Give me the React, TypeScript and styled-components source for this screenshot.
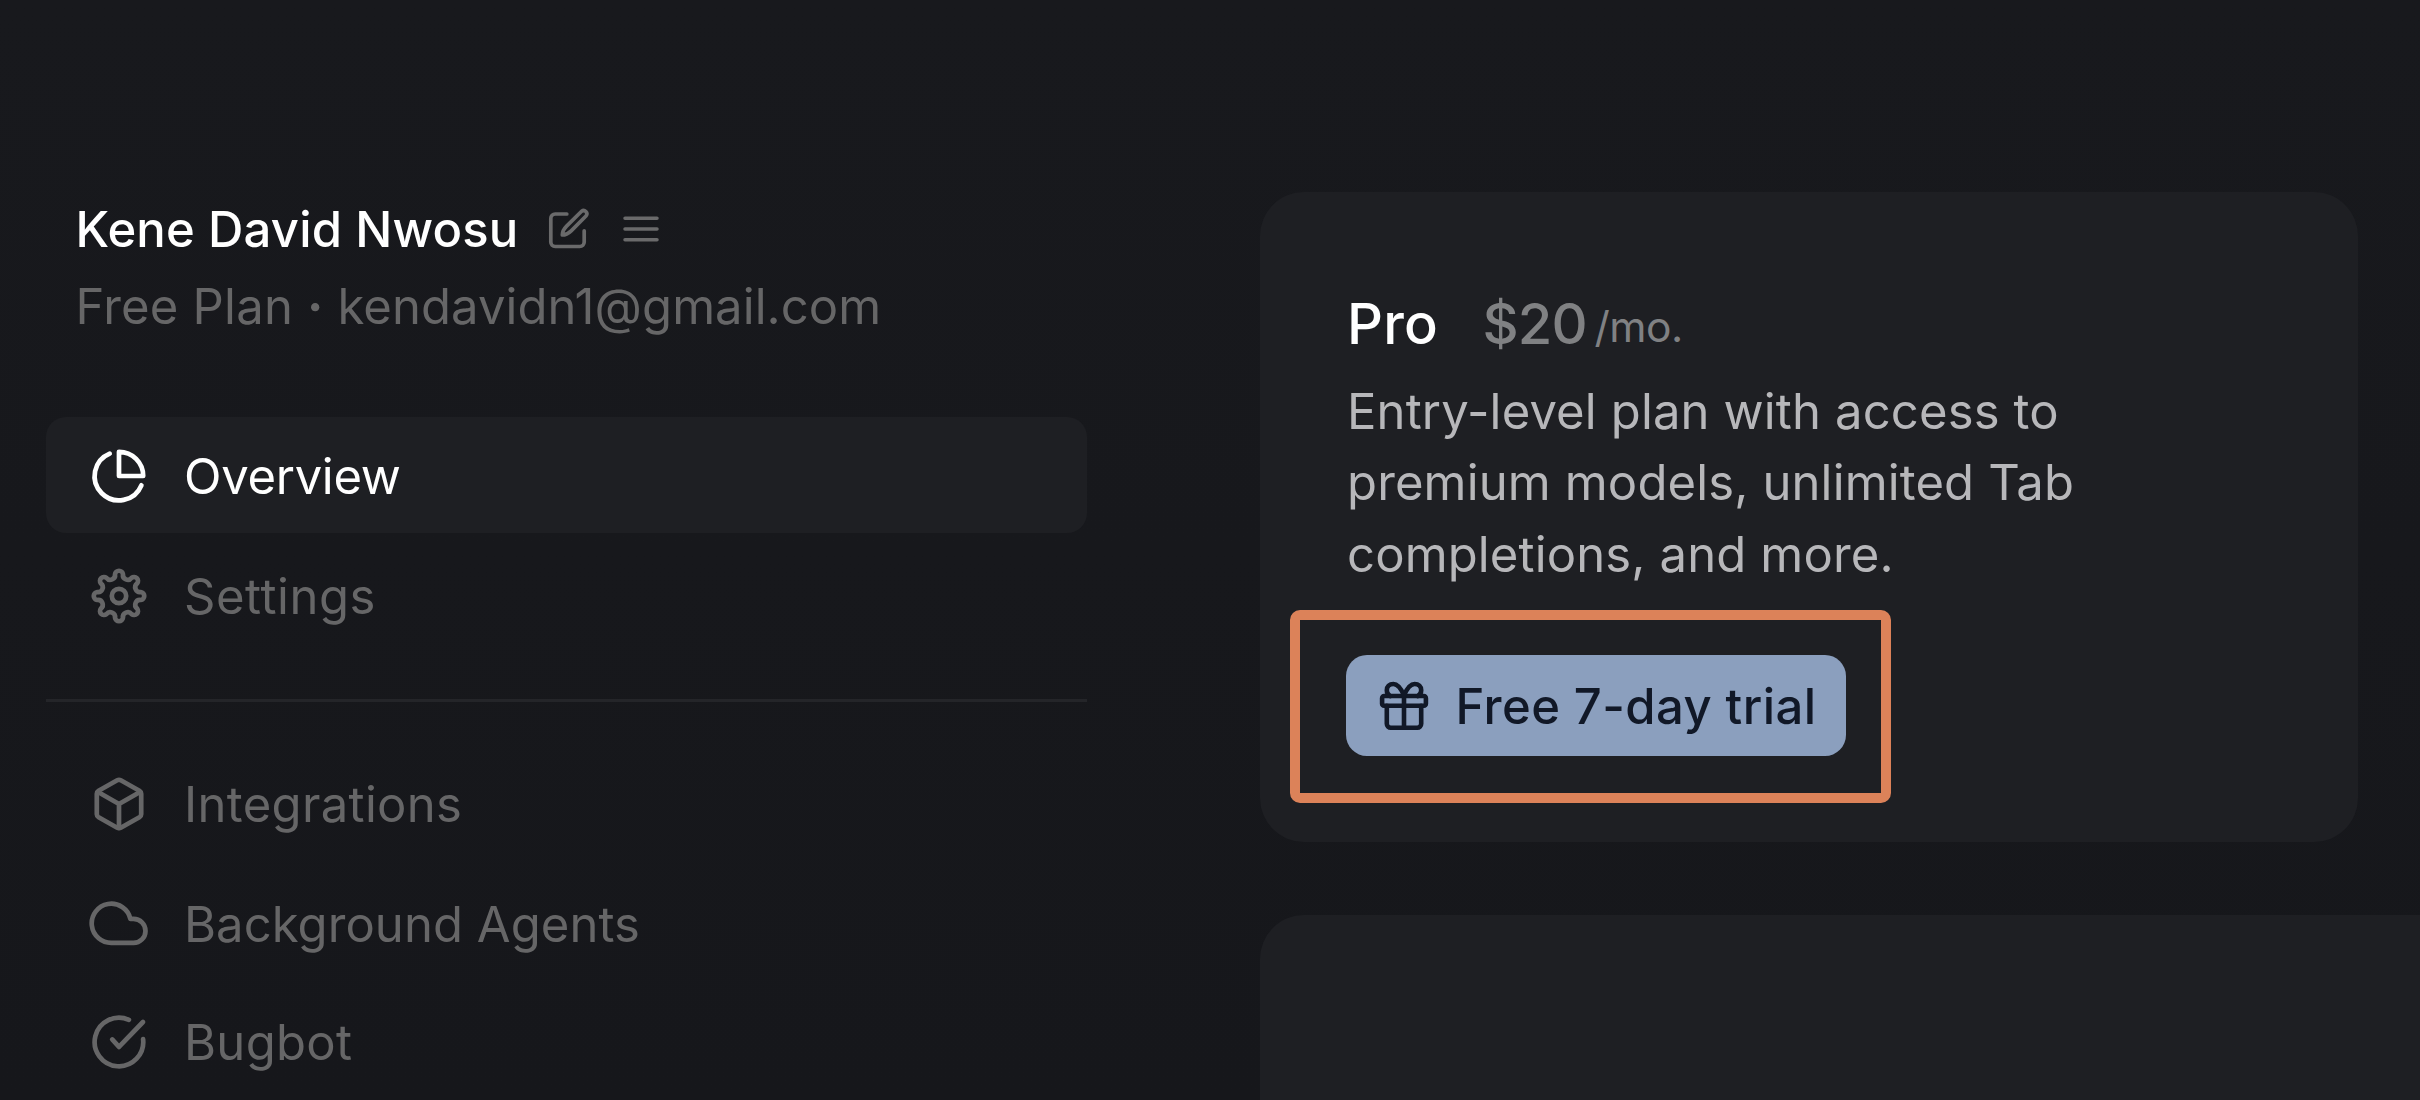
import React from 'react';
import styled, { createGlobalStyle } from 'styled-components';

const GlobalStyle = createGlobalStyle`
  *, *::before, *::after { box-sizing: border-box; }
  html, body { margin: 0; background: #17181c; }
  body {
    font-family: Inter, "Liberation Sans", sans-serif;
    overflow: hidden;
    -webkit-font-smoothing: antialiased;
  }
`;

const Page = styled.div`
  display: flex;
  align-items: flex-start;
  gap: 173.5px;
  width: 2420px;
  height: 1100px;
  padding-left: 46px;
  overflow: hidden;
  background: linear-gradient(#18191d, #16171b);
`;

const Sidebar = styled.aside`
  flex: none;
  width: 1040.5px;
  padding-top: 200px;
`;

const Profile = styled.header`
  display: flex;
  flex-direction: column;
  gap: 17px;
  padding-left: 29.5px;
  white-space: nowrap;
`;

const NameRow = styled.div`
  display: flex;
  align-items: center;
  height: 60px;
`;

const Name = styled.h1`
  margin: 0 28.5px 0 0;
  font-size: 49px;
  line-height: 60px;
  font-weight: 500;
  letter-spacing: 0.15px;
  color: #fff;
`;

const IconButton = styled.button<{ $offset?: number; $lift?: number }>`
  display: flex;
  margin: ${p => -(p.$lift ?? 2)}px 0 0 ${p => p.$offset ?? 0}px;
  padding: 0;
  border: 0;
  background: none;
  color: #6a6a6b;
`;

const PlanLine = styled.p`
  margin: 0;
  font-size: 49px;
  line-height: 60px;
  letter-spacing: 0.21px;
  color: #666667;
`;

const Dot = styled.span`
  margin: 0 -0.2px 0 0;
  font-weight: 700;
`;

const Email = styled.span`
  letter-spacing: 0.07px;
`;

const NavList = styled.nav<{ $rows: string; $top: number }>`
  display: grid;
  grid-template-rows: ${p => p.$rows};
  gap: 4px;
  margin-top: ${p => p.$top}px;
`;

const NavItem = styled.a<{ $active?: boolean }>`
  display: flex;
  align-items: center;
  gap: 35.5px;
  padding: 2px 0 0 42.5px;
  border-radius: 20px;
  color: ${p => (p.$active ? '#fff' : '#666667')};
  background: ${p => (p.$active ? '#1e1f23' : 'transparent')};
`;

const NavLabel = styled.span<{ $tracking: number }>`
  padding-top: 2px;
  font-size: 49px;
  line-height: 60px;
  letter-spacing: ${p => p.$tracking}px;
  white-space: nowrap;
`;

const Divider = styled.hr`
  height: 3px;
  margin: 46px 0 0;
  border: 0;
  background: #242529;
`;

const Main = styled.main`
  flex: none;
  display: flex;
  flex-direction: column;
  gap: 72.5px;
  width: 1240px;
  padding-top: 192px;
`;

const Card = styled.section`
  width: 1098px;
  height: 650px;
  padding: 96px 0 0 87px;
  border-radius: 44px;
  background: #1e1f23;
`;

const WideCard = styled.section`
  height: 260px;
  border-radius: 44px 0 0 0;
  background: #1e1f23;
`;

const PlanHeading = styled.div`
  display: flex;
  height: 72px;
  white-space: nowrap;
`;

const PlanName = styled.h2`
  margin: 0 44.5px 0 0;
  font-size: 56px;
  line-height: 72px;
  font-weight: 500;
  letter-spacing: 0.2px;
  color: #fff;
`;

const Price = styled.span`
  font-size: 56px;
  line-height: 72px;
  font-weight: 500;
  letter-spacing: -0.8px;
  color: #808183;
`;

const Period = styled.span`
  margin-left: 7.5px;
  font-size: 42.5px;
  line-height: 78px;
  letter-spacing: -0.5px;
  color: #808183;
`;

const Description = styled.p`
  margin: 15.5px 0 0;
  font-size: 49px;
  line-height: 71.67px;
  letter-spacing: 0.14px;
  color: #b7b7ba;
  white-space: nowrap;
`;

const TrialAction = styled.div`
  position: relative;
  width: 500px;
  margin: 64px 0 0 -1px;
`;

const TrialButton = styled.button`
  display: flex;
  align-items: center;
  gap: 23.5px;
  width: 100%;
  height: 101px;
  padding: 1px 0 0 30px;
  border: 0;
  border-radius: 21px;
  background: #8b9fbe;
  color: #111827;
  font: inherit;
  font-size: 49px;
  line-height: 60px;
  font-weight: 500;
  letter-spacing: 0.42px;
  white-space: nowrap;
`;

const TrialLabel = styled.span`
  padding-top: 3px;
`;

const Highlight = styled.div`
  position: absolute;
  top: -45px;
  left: -56px;
  width: 601px;
  height: 193px;
  border: 10px solid #dc8259;
  border-radius: 10px;
  pointer-events: none;
`;

/* Stroke icons drawn around a (0,0) centre in device pixels. */
function Glyph({ size = 60, stroke = 4.7, children }: { size?: number; stroke?: number; children: React.ReactNode }) {
  const h = size / 2;
  return (
    <svg
      width={size}
      height={size}
      viewBox={`${-h} ${-h} ${size} ${size}`}
      fill="none"
      stroke="currentColor"
      strokeWidth={stroke}
      strokeLinecap="round"
      strokeLinejoin="round"
    >
      {children}
    </svg>
  );
}

const PieIcon = () => (
  <Glyph>
    <path d="M-9.3 -22.4A24.3 24.3 0 1 0 22.4 9.3" />
    <path d="M0 -24.2A24.2 24.2 0 0 1 24.2 0H0Z" />
  </Glyph>
);

/* Eight round teeth joined by round valleys, every arc tangent to the next. */
function gearPath(): string {
  const toothDist = 22.3;
  const toothR = 4;
  const valleyDist = 22.8;
  const valleyR = 4.8;
  const at = (r: number, deg: number) => {
    const a = ((deg - 90) * Math.PI) / 180;
    return [r * Math.cos(a), r * Math.sin(a)];
  };
  const join = (toothDeg: number, valleyDeg: number) => {
    const t = at(toothDist, toothDeg);
    const v = at(valleyDist, valleyDeg);
    const k = toothR / (toothR + valleyR);
    return `${(t[0] + (v[0] - t[0]) * k).toFixed(2)} ${(t[1] + (v[1] - t[1]) * k).toFixed(2)}`;
  };
  let d = `M${join(0, -22.5)}`;
  for (let i = 0; i < 8; i++) {
    const deg = i * 45;
    d += `A${toothR} ${toothR} 0 0 1 ${join(deg, deg + 22.5)}`;
    d += `A${valleyR} ${valleyR} 0 0 0 ${join(deg + 45, deg + 22.5)}`;
  }
  return `${d}Z`;
}

const GearIcon = () => (
  <Glyph>
    <path d={gearPath()} />
    <circle r="7.2" />
  </Glyph>
);

const BoxIcon = () => (
  <Glyph>
    <path d="M-1.8 -23.7Q0 -24.7 1.8 -23.7L20.4 -13.2Q22.2 -12.1 22.2 -10.2V10.2Q22.2 12.1 20.4 13.2L1.8 23.7Q0 24.7 -1.8 23.7L-20.4 13.2Q-22.2 12.1 -22.2 10.2V-10.2Q-22.2 -12.1 -20.4 -13.2Z" />
    <path d="M-21 -12L0 0L21 -12M0 0V24" />
  </Glyph>
);

const CloudIcon = () => (
  <Glyph>
    <path d="M-6.6 18.9A19.6 19.6 0 1 1 11.4 -5.1H14.5A12 12 0 0 1 14.5 18.9Z" />
  </Glyph>
);

const CheckIcon = () => (
  <Glyph>
    <path d="M9.9 -22.2A24.3 24.3 0 1 0 24.1 -2.8" />
    <path d="M-6.8 -2.6L0 4.9L24 -20" />
  </Glyph>
);

const EditIcon = () => (
  <svg width="44" height="44" viewBox="0 0 44 44" fill="none" stroke="currentColor" strokeWidth="3.7" strokeLinecap="round" strokeLinejoin="round">
    <path d="M19.8 8H8.2A4.4 4.4 0 0 0 3.8 12.4V36.1A4.4 4.4 0 0 0 8.2 40.5H32.8A4.4 4.4 0 0 0 37.2 36.1V24.8" />
    <path d="M34.6 5.2L19.6 20.1C17 22.7 15.3 26 15.3 29C18.3 29 21.6 27.3 24.2 24.8L39.2 9.8A3.3 3.3 0 0 0 34.6 5.2Z" />
  </svg>
);

const MenuIcon = () => (
  <svg width="40" height="40" viewBox="0 0 40 40" fill="none" stroke="currentColor" strokeWidth="3.5" strokeLinecap="round">
    <path d="M4 9.2H36M4 20H36M4 30.8H36" />
  </svg>
);

const GiftIcon = () => (
  <Glyph size={56} stroke={4.6}>
    <rect x="-21.9" y="-10" width="43.8" height="9.8" rx="2" />
    <path d="M-17.2 -0.2V17.8A4 4 0 0 0 -13.2 21.8H13.2A4 4 0 0 0 17.2 17.8V-0.2M0 -10V21.8" />
    <path d="M0 -10.6C-2.4 -16.2 -6 -22 -10.6 -22C-14.6 -22 -17.2 -19.4 -17.2 -15.8C-17.2 -13.4 -16 -11.2 -14 -10M0 -10.6C2.4 -16.2 6 -22 10.6 -22C14.6 -22 17.2 -19.4 17.2 -15.8C17.2 -13.4 16 -11.2 14 -10" />
  </Glyph>
);

export default function App() {
  return (
    <>
      <GlobalStyle />
      <Page>
        <Sidebar>
          <Profile>
            <NameRow>
              <Name>Kene David Nwosu</Name>
              <IconButton aria-label="Edit name" $lift={4}><EditIcon /></IconButton>
              <IconButton aria-label="Menu" $offset={30}><MenuIcon /></IconButton>
            </NameRow>
            <PlanLine>Free Plan <Dot>·</Dot> <Email>kendavidn1@gmail.com</Email></PlanLine>
          </Profile>
          <NavList $rows="116px 116px" $top={80}>
            <NavItem $active><PieIcon /><NavLabel $tracking={-0.3}>Overview</NavLabel></NavItem>
            <NavItem><GearIcon /><NavLabel $tracking={0.55}>Settings</NavLabel></NavItem>
          </NavList>
          <Divider />
          <NavList $rows="116px 116px 112px" $top={43}>
            <NavItem><BoxIcon /><NavLabel $tracking={0.33}>Integrations</NavLabel></NavItem>
            <NavItem><CloudIcon /><NavLabel $tracking={0.06}>Background Agents</NavLabel></NavItem>
            <NavItem><CheckIcon /><NavLabel $tracking={0.3}>Bugbot</NavLabel></NavItem>
          </NavList>
        </Sidebar>
        <Main>
          <Card>
            <PlanHeading>
              <PlanName>Pro</PlanName>
              <Price>$20</Price>
              <Period>/mo.</Period>
            </PlanHeading>
            <Description>
              Entry-level plan with access to<br />
              premium models, unlimited Tab<br />
              completions, and more.
            </Description>
            <TrialAction>
              <TrialButton><GiftIcon /><TrialLabel>Free 7-day trial</TrialLabel></TrialButton>
              <Highlight />
            </TrialAction>
          </Card>
          <WideCard />
        </Main>
      </Page>
    </>
  );
}
